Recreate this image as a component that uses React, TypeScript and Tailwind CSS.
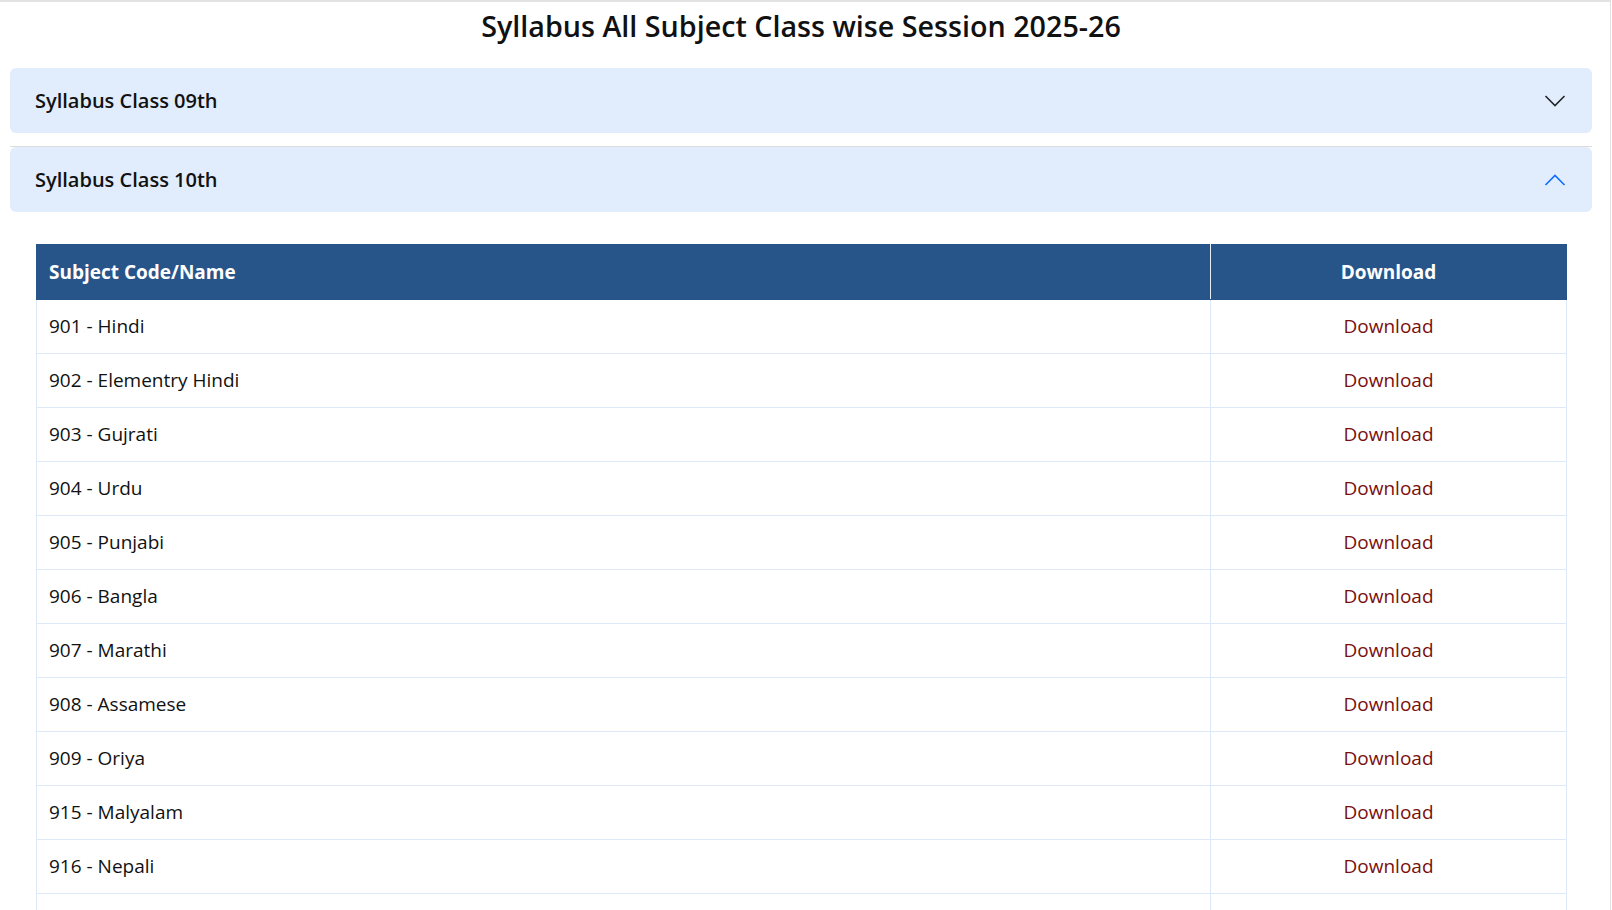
const subjects = [
  "901 - Hindi",
  "902 - Elementry Hindi",
  "903 - Gujrati",
  "904 - Urdu",
  "905 - Punjabi",
  "906 - Bangla",
  "907 - Marathi",
  "908 - Assamese",
  "909 - Oriya",
  "915 - Malyalam",
  "916 - Nepali",
  "917 - Manipuri",
  "918 - Sanskrit",
];

function Chevron({ up }: { up?: boolean }) {
  return (
    <svg width="22" height="12" viewBox="0 0 22 12" fill="none" className="shrink-0">
      <polyline
        points={up ? "1.5,11 11,1.5 20.5,11" : "1.5,1 11,10.5 20.5,1"}
        stroke={up ? "#0d6efd" : "#212529"}
        strokeWidth="1.6"
      />
    </svg>
  );
}

function AccordionHeader({ title, open }: { title: string; open?: boolean }) {
  return (
    <button className="flex h-[65px] w-full items-center justify-between rounded-[6px] bg-[#e1edfd] pl-[25px] pr-[26px] text-left text-[20px] font-semibold text-[#111]">
      <span>{title}</span>
      <Chevron up={open} />
    </button>
  );
}

export default function App() {
  return (
    <div
      className="min-h-[910px] w-[1611px] border-t-2 border-r border-[#e2e2e2] bg-white"
      style={{ fontFamily: '"Open Sans", "Noto Sans", sans-serif' }}
    >
      <div className="ml-[10px] mr-[18px]">
        <h1 className="pt-[6px] text-center text-[28.7px] font-semibold leading-[36px] text-[#111]">
          Syllabus All Subject Class wise Session 2025-26
        </h1>

        <div className="mt-[24px]">
          <AccordionHeader title="Syllabus Class 09th" />
        </div>
        <div className="mt-[13px] border-t border-[#dcdcdc]">
          <AccordionHeader title="Syllabus Class 10th" open />
          <div className="pl-[26px] pr-[25px] pt-[32px]">
            <table className="w-full border-collapse">
              <thead>
                <tr className="bg-[#285589] text-white">
                  <th className="h-[55px] w-[1174px] border border-[#285589] border-r-[#e6eef9] px-3 text-left text-[19px] font-bold">
                    Subject Code/Name
                  </th>
                  <th className="h-[55px] border border-[#285589] px-3 text-center text-[19px] font-bold">
                    Download
                  </th>
                </tr>
              </thead>
              <tbody>
                {subjects.map((s) => (
                  <tr key={s}>
                    <td className="h-[54px] border border-[#dde9f9] px-3 text-[19px] text-[#111]">
                      {s}
                    </td>
                    <td className="h-[54px] border border-[#dde9f9] px-3 text-center text-[19px]">
                      <a href="#" className="text-[#7a0e0e]">
                        Download
                      </a>
                    </td>
                  </tr>
                ))}
              </tbody>
            </table>
          </div>
        </div>
      </div>
    </div>
  );
}
